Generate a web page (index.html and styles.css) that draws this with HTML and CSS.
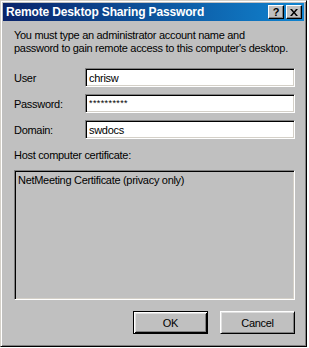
FILE: index.html
```html
<!DOCTYPE html>
<html lang="en">
<head>
  <meta charset="UTF-8">
  <title>Remote Desktop Sharing Password</title>
  <link rel="stylesheet" href="styles.css">
</head>
<body>
  <div class="window">
    <div class="titlebar">
      <span class="title">Remote Desktop Sharing Password</span>
      <div class="title-buttons">
        <span class="tbtn">?</span>
        <span class="tbtn close">
          <svg width="8" height="7" viewBox="0 0 8 7"><path d="M0 0h2l2 2.5L6 0h2L5 3.5 8 7H6L4 4.5 2 7H0l3-3.5z" fill="#000"/></svg>
        </span>
      </div>
    </div>

    <div class="content">
      <p class="intro">You must type an administrator account name and<br>password to gain remote access to this computer's desktop.</p>

      <div class="fields">
        <div class="row">
          <label>User</label>
          <div class="field">chrisw</div>
        </div>
        <div class="row">
          <label>Password:</label>
          <div class="field secret">**********</div>
        </div>
        <div class="row">
          <label>Domain:</label>
          <div class="field">swdocs</div>
        </div>
      </div>

      <div class="host-label">Host computer certificate:</div>
      <div class="cert-box">NetMeeting Certificate (privacy only)</div>

      <div class="actions">
        <button class="btn default">OK</button>
        <button class="btn">Cancel</button>
      </div>
    </div>
  </div>
</body>
</html>
```

FILE: styles.css
```css
body {
  margin: 0;
  padding: 0;
  background-color: #fff;
  font-family: "Liberation Sans", Arial, sans-serif;
  font-size: 11px;
  letter-spacing: -0.3px;
  color: #000;
}

.window {
  width: 307px;
  height: 347px;
  box-sizing: border-box;
  background-color: #c0c0c0;
  border: 1px solid;
  border-color: #d4d0c8 #000 #000 #d4d0c8;
  box-shadow: inset 1px 1px #fff, inset -1px -1px #808080;
  padding: 2px;
  display: flex;
  flex-direction: column;
}

.titlebar {
  height: 18px;
  background: linear-gradient(to right, #0a246a, #1084d0);
  display: flex;
  align-items: center;
  justify-content: space-between;
}

.title {
  color: #fff;
  font-weight: bold;
  font-size: 12px;
  padding-left: 3px;
  letter-spacing: -0.15px;
}

.title-buttons {
  display: flex;
  gap: 2px;
  margin-right: 2px;
}

.tbtn {
  width: 16px;
  height: 14px;
  box-sizing: border-box;
  background-color: #c0c0c0;
  border: 1px solid;
  border-color: #fff #000 #000 #fff;
  box-shadow: inset -1px -1px #808080;
  display: flex;
  align-items: center;
  justify-content: center;
  font-weight: bold;
  font-size: 11px;
  line-height: 1;
}

.close svg {
  display: block;
}

.content {
  flex: 1;
  padding: 8px 9px 0 11px;
  display: flex;
  flex-direction: column;
}

.intro {
  margin: 0;
  line-height: 13px;
  white-space: nowrap;
}

.fields {
  margin-top: 13px;
  display: flex;
  flex-direction: column;
  gap: 7px;
}

.row {
  display: flex;
  align-items: center;
}

.row label {
  width: 71px;
}

.field {
  flex: 1;
  height: 19px;
  box-sizing: border-box;
  background-color: #fff;
  border: 1px solid;
  border-color: #808080 #fff #fff #808080;
  box-shadow: inset 1px 1px #000, inset -1px -1px #d4d0c8;
  padding: 2px 3px;
  line-height: 14px;
}

.field.secret {
  font-size: 9px;
  line-height: 10px;
  letter-spacing: 0.4px;
  padding-top: 3px;
}

.host-label {
  margin-top: 10px;
  line-height: 13px;
}

.cert-box {
  margin-top: 8px;
  height: 130px;
  box-sizing: border-box;
  border: 1px solid;
  border-color: #808080 #fff #fff #808080;
  box-shadow: inset 1px 1px #000, inset -1px -1px #d4d0c8;
  padding: 3px 3px;
  line-height: 13px;
}

.actions {
  margin-top: 11px;
  display: flex;
  justify-content: flex-end;
  gap: 12px;
}

.btn {
  width: 75px;
  height: 23px;
  box-sizing: border-box;
  background-color: #c0c0c0;
  border: 1px solid;
  border-color: #fff #000 #000 #fff;
  box-shadow: inset 1px 1px #dfdfdf, inset -1px -1px #808080;
  font-family: "Liberation Sans", Arial, sans-serif;
  font-size: 11px;
  letter-spacing: -0.3px;
  color: #000;
  padding: 0;
}

.btn.default {
  border: 1px solid #000;
  box-shadow: inset 1px 1px #fff, inset -1px -1px #000, inset 2px 2px #dfdfdf, inset -2px -2px #808080;
}
```
